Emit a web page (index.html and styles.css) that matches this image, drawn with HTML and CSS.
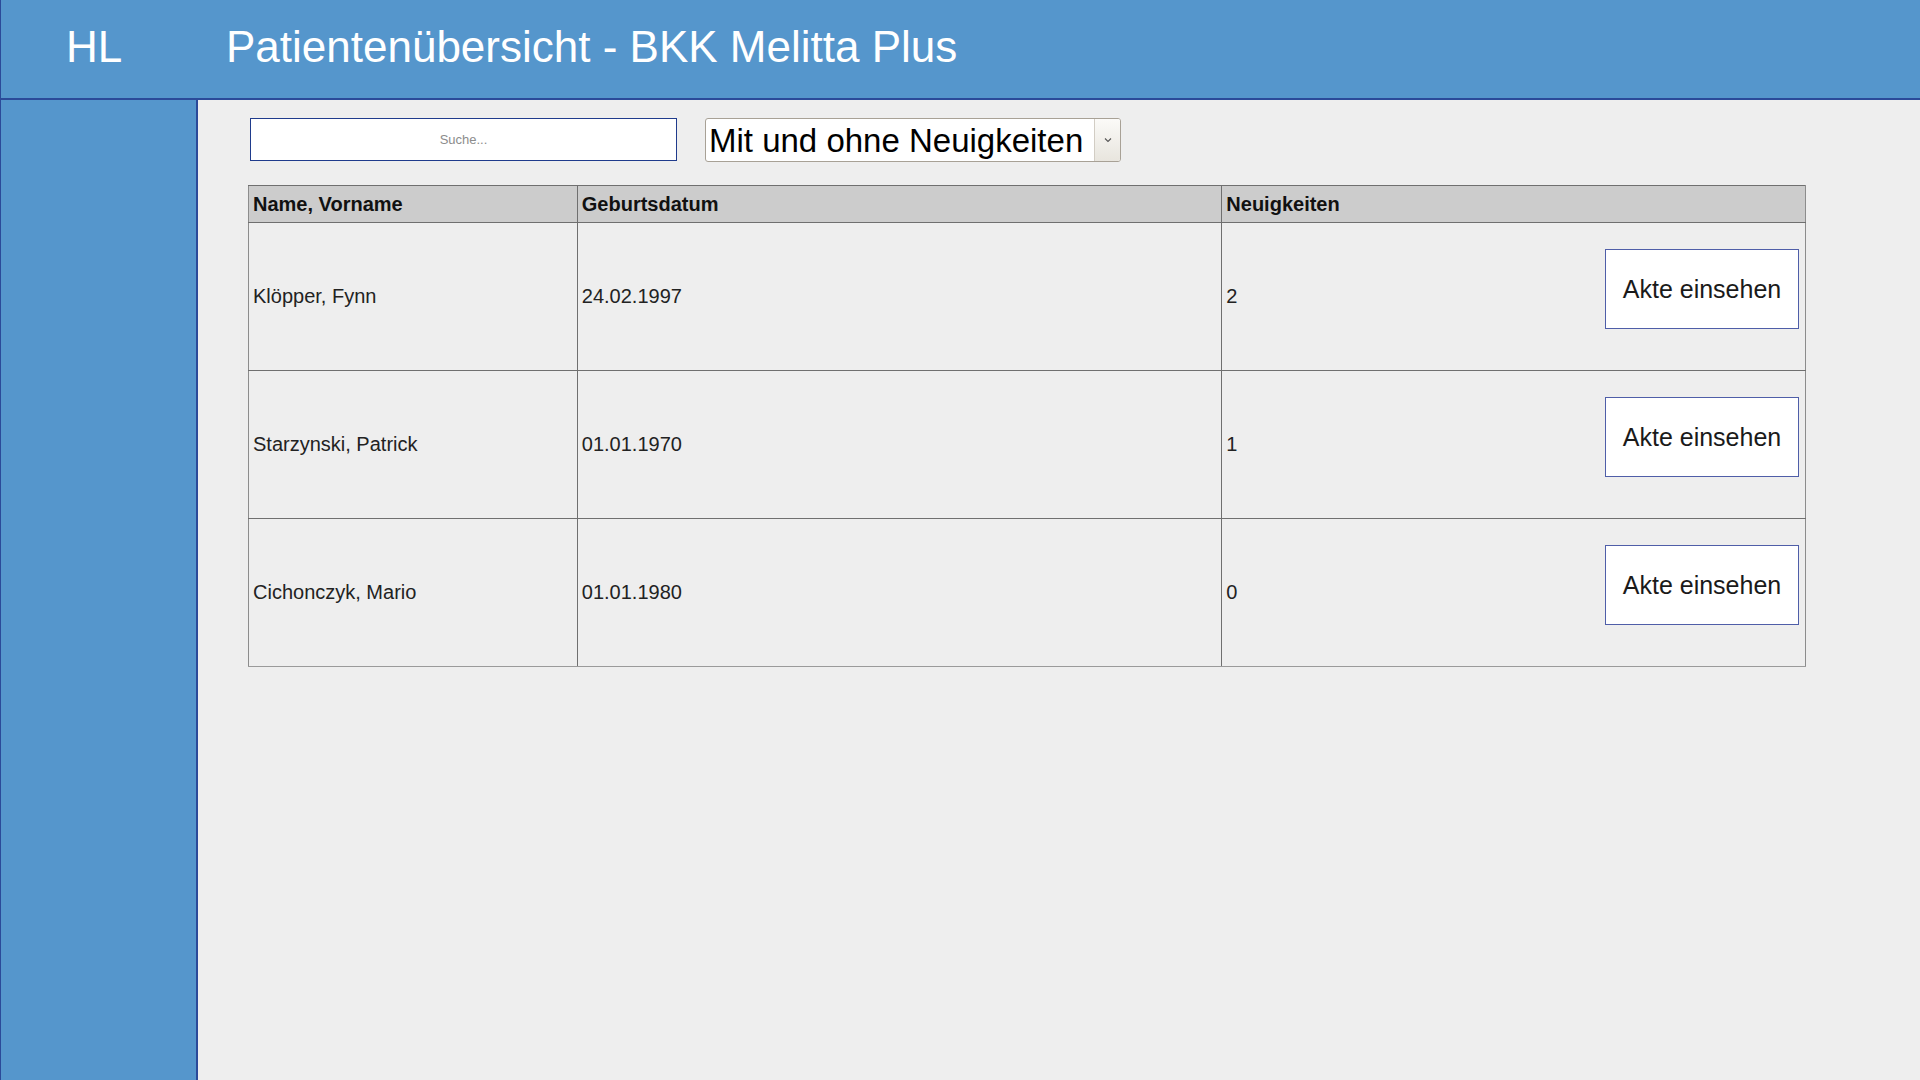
FILE: index.html
```html
<!DOCTYPE html>
<html lang="de">
<head>
<meta charset="utf-8">
<title>Patientenübersicht - BKK Melitta Plus</title>
<link rel="stylesheet" href="styles.css">
</head>
<body>
<div class="app">
  <header class="topbar">
    <div class="logo">HL</div>
    <h1 class="title">Patientenübersicht - BKK Melitta Plus</h1>
  </header>
  <div class="main">
    <aside class="sidebar"></aside>
    <main class="content">
      <div class="toolbar">
        <input class="search" type="text" placeholder="Suche...">
        <div class="filter">
          <select class="filter-select">
            <option>Mit und ohne Neuigkeiten</option>
            <option>Mit Neuigkeiten</option>
            <option>Ohne Neuigkeiten</option>
          </select>
          <span class="filter-btn">
            <svg width="8" height="6" viewBox="0 0 8 6"><path d="M1 1.5 L4 4.5 L7 1.5" fill="none" stroke="#555" stroke-width="1.1"/></svg>
          </span>
        </div>
      </div>
      <table class="patients">
        <colgroup>
          <col class="col-name">
          <col class="col-date">
          <col class="col-news">
        </colgroup>
        <thead>
          <tr><th>Name, Vorname</th><th>Geburtsdatum</th><th>Neuigkeiten</th></tr>
        </thead>
        <tbody>
          <tr>
            <td>Klöpper, Fynn</td>
            <td>24.02.1997</td>
            <td class="news-cell"><div class="news"><span class="count">2</span><button class="open-btn">Akte einsehen</button></div></td>
          </tr>
          <tr>
            <td>Starzynski, Patrick</td>
            <td>01.01.1970</td>
            <td class="news-cell"><div class="news"><span class="count">1</span><button class="open-btn">Akte einsehen</button></div></td>
          </tr>
          <tr>
            <td>Cichonczyk, Mario</td>
            <td>01.01.1980</td>
            <td class="news-cell"><div class="news"><span class="count">0</span><button class="open-btn">Akte einsehen</button></div></td>
          </tr>
        </tbody>
      </table>
    </main>
  </div>
</div>
</body>
</html>
```
FILE: styles.css
```css
html, body {
  margin: 0;
  height: 100%;
}
body {
  font-family: "Liberation Sans", Arial, sans-serif;
  background: #eeeeee;
  overflow: hidden;
}
.app {
  display: flex;
  flex-direction: column;
  height: 100vh;
}
.topbar {
  height: 77px;
  padding-top: 21px;
  background: #5596cc;
  border-left: 1px solid #2b4a99;
  border-bottom: 2px solid #2b4a99;
  display: flex;
  align-items: flex-start;
  color: #ffffff;
  flex-shrink: 0;
}
.logo {
  width: 160px;
  padding-left: 65px;
  font-size: 44px;
  line-height: 51px;
}
.title {
  margin: 0;
  font-size: 44px;
  line-height: 51px;
  font-weight: normal;
}
.main {
  flex: 1;
  display: flex;
}
.sidebar {
  width: 195px;
  background: #5596cc;
  border-left: 1px solid #2b4a99;
  border-right: 2px solid #2b4a99;
  flex-shrink: 0;
}
.content {
  flex: 1;
  padding: 18px 0 0 50px;
}
.toolbar {
  display: flex;
  align-items: flex-start;
  gap: 28px;
  margin-left: 2px;
}
.search {
  width: 427px;
  height: 43px;
  box-sizing: border-box;
  border: 1px solid #1f3b8c;
  background: #ffffff;
  text-align: center;
  font-family: "Liberation Sans", Arial, sans-serif;
  font-size: 13px;
  padding: 0;
  outline: none;
}
.search::placeholder {
  color: #8c8c8c;
}
.filter {
  display: flex;
  width: 416px;
  height: 44px;
  box-sizing: border-box;
  border: 1px solid #a8a196;
  border-radius: 3px;
  background: #ffffff;
  overflow: hidden;
}
.filter-select {
  flex: 1;
  min-width: 0;
  appearance: none;
  -webkit-appearance: none;
  border: 0;
  background: transparent;
  font-family: "Liberation Sans", Arial, sans-serif;
  font-size: 33px;
  color: #000000;
  padding: 0 0 0 3px;
  outline: none;
}
.filter-btn {
  width: 25px;
  border-left: 1px solid #d2cdc4;
  background: linear-gradient(#fbfaf8, #e8e5de);
  display: flex;
  align-items: center;
  justify-content: center;
}
.patients {
  margin-top: 23px;
  width: 1558px;
  border-collapse: collapse;
}
.col-name { width: 329px; }
.col-date { width: 645px; }
.col-news { width: 584px; }
.patients th {
  background: #cccccc;
  text-align: left;
  font-size: 20px;
  font-weight: bold;
  color: #111111;
  padding: 7px 4px 6px;
  border: 1px solid #6f6f6f;
}
.patients td {
  font-size: 20px;
  color: #222222;
  padding: 0 4px;
  height: 147px;
  vertical-align: middle;
  border: 1px solid #6f6f6f;
}
.patients th:first-child,
.patients td:first-child {
  border-left-color: #8c8c8c;
}
.patients th:last-child,
.patients td:last-child {
  border-right-color: #8c8c8c;
}
.patients tbody tr:last-child td {
  border-bottom-color: #9a9a9a;
}
.patients td.news-cell {
  padding: 0 6px 0 4px;
}
.news {
  display: flex;
  justify-content: space-between;
  align-items: flex-start;
  height: 147px;
}
.count {
  align-self: center;
}
.open-btn {
  margin-top: 26px;
  width: 194px;
  height: 80px;
  box-sizing: border-box;
  border: 1px solid #4f5ea8;
  background: #ffffff;
  font-family: "Liberation Sans", Arial, sans-serif;
  font-size: 25px;
  color: #1a1a1a;
  padding: 0;
  cursor: pointer;
}
```
